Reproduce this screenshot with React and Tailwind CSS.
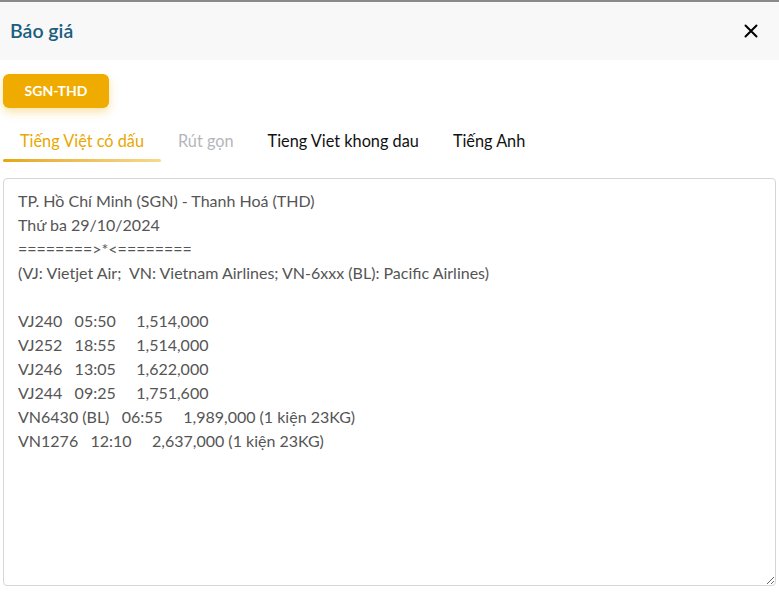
import React, { useState } from 'react';

const text = `TP. Hồ Chí Minh (SGN) - Thanh Hoá (THD)
Thứ ba 29/10/2024
========>*<========
(VJ: Vietjet Air;  VN: Vietnam Airlines; VN-6xxx (BL): Pacific Airlines)

VJ240   05:50     1,514,000
VJ252   18:55     1,514,000
VJ246   13:05     1,622,000
VJ244   09:25     1,751,600
VN6430 (BL)   06:55     1,989,000 (1 kiện 23KG)
VN1276   12:10     2,637,000 (1 kiện 23KG)`;

const tabs = ['Tiếng Việt có dấu', 'Rút gọn', 'Tieng Viet khong dau', 'Tiếng Anh'];

export default function App() {
  const [tab, setTab] = useState(0);
  const [value, setValue] = useState(text);

  return (
    <div className="w-[779px] h-[599px] bg-white border-t-2 border-[#8a8a8a] font-['Lato',sans-serif] overflow-hidden">
      {/* header */}
      <div className="h-[58px] bg-[#f8f8f8] flex items-center justify-between pl-[10px] pr-[18px]">
        <h1 className="text-[19.5px] font-semibold text-[#1b5e7e]">Báo giá</h1>
        <button className="w-5 h-5 flex items-center justify-center text-black">
          <svg width="14" height="14" viewBox="0 0 14 14" fill="none" stroke="currentColor" strokeWidth="2" strokeLinecap="round">
            <path d="M1.5 1.5l11 11M12.5 1.5l-11 11" />
          </svg>
        </button>
      </div>

      <div className="px-[3px] pt-[14px]">
        <button className="h-[34px] w-[106px] rounded-[6px] bg-[#f0ab00] text-white text-[14px] font-bold pb-[1px] shadow-[0_4px_10px_rgba(240,171,0,0.35)]">
          SGN-THD
        </button>

        {/* tabs */}
        <div className="flex mt-[16px] h-[37px]">
          {tabs.map((t, i) => (
            <button
              key={t}
              onClick={() => setTab(i)}
              className={
                'relative h-full text-[16.3px] pb-[2px] px-[17px] ' +
                (i === tab
                  ? 'text-[#e9a700]'
                  : i === 1
                  ? 'text-[#b4b6bb]'
                  : 'text-[#111]')
              }
            >
              {t}
              {i === tab && (
                <span className="absolute left-0 right-0 bottom-[-1px] h-[3px] rounded-full bg-gradient-to-r from-[#e6a700] to-[#f6d98c]" />
              )}
            </button>
          ))}
        </div>

        <textarea
          value={value}
          onChange={(e) => setValue(e.target.value)}
          className="mt-[17px] w-[773px] h-[408px] border border-[#d6d6d6] rounded-[4px] px-[14px] py-[10px] text-[16px] leading-[24px] text-[#555] outline-none font-['Lato',sans-serif] block"
        />
      </div>
    </div>
  );
}
